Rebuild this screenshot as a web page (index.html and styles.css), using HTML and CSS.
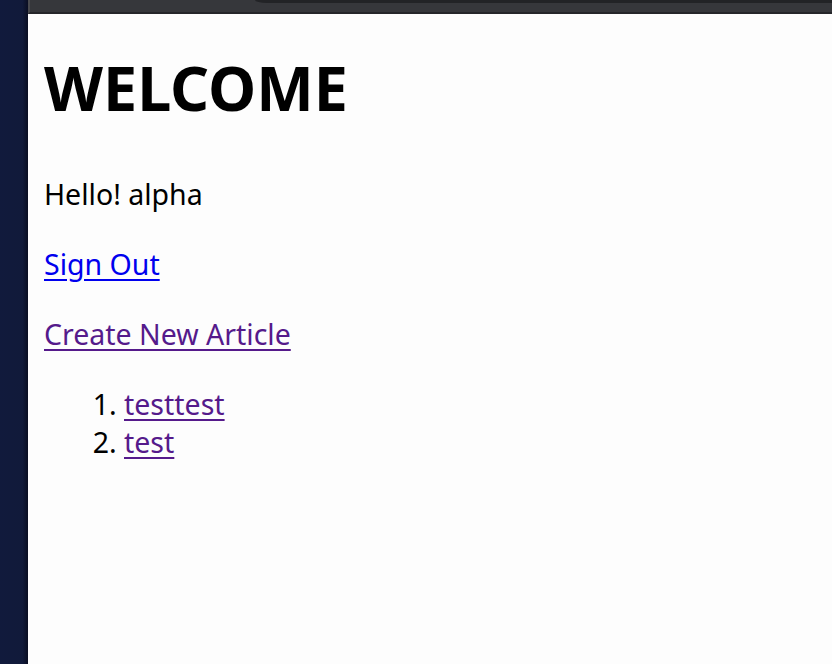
FILE: index.html
```html
<!DOCTYPE html>
<html>
<head>
<meta charset="utf-8">
<link rel="stylesheet" href="styles.css">
</head>
<body>
<div class="frame">
  <div class="side"></div>
  <div class="main">
    <div class="topbar">
      <div class="tabstrip"><div class="tabgap"></div><div class="tabdark"></div></div>
    </div>
    <div class="page">
      <h1 class="title">WELCOME</h1>
      <p class="line">Hello! alpha</p>
      <p class="line"><a class="link" href="#">Sign Out</a></p>
      <p class="line"><a class="link visited" href="#">Create New Article</a></p>
      <ol class="list">
        <li class="item"><a class="link visited" href="#">testtest</a></li>
        <li class="item"><a class="link visited" href="#">test</a></li>
      </ol>
    </div>
  </div>
</div>
</body>
</html>
```
FILE: styles.css
```css
html, body {
  margin: 0;
  padding: 0;
  height: 100%;
}
.frame {
  display: flex;
  height: 664px;
  width: 832px;
  overflow: hidden;
}
.side {
  width: 28px;
  flex: none;
  background: linear-gradient(90deg, #111a3c 0%, #111a3a 80%, #0a0e22 100%);
}
.main {
  flex: 1;
  display: flex;
  flex-direction: column;
}
.topbar {
  height: 14px;
  flex: none;
  background: #36373b;
  border-left: 2px solid #4a4b4f;
  border-bottom: 2px solid #25262a;
  box-sizing: border-box;
}
.tabstrip {
  display: flex;
  height: 3px;
}
.tabgap {
  width: 225px;
}
.tabdark {
  flex: 1;
  background: #222326;
  border-bottom-left-radius: 12px 3px;
}
.page {
  flex: 1;
  background: #fdfdfd;
  padding: 1px 16px 0 16px;
  font-family: "Noto Sans", "Open Sans", sans-serif;
  color: #000;
}
.title {
  font-size: 61px;
  font-weight: bold;
  line-height: 77px;
  margin: 34px 0 49px 0;
}
.line {
  font-size: 28.5px;
  line-height: 38px;
  margin: 0 0 32px 0;
}
.link {
  color: #0000ee;
  text-decoration: underline;
  text-underline-offset: 4px;
}
.link.visited {
  color: #551a8b;
}
.list {
  margin: 0;
  padding-left: 80px;
  font-size: 28.5px;
  line-height: 38px;
}
.item {
  margin: 0;
}
```
